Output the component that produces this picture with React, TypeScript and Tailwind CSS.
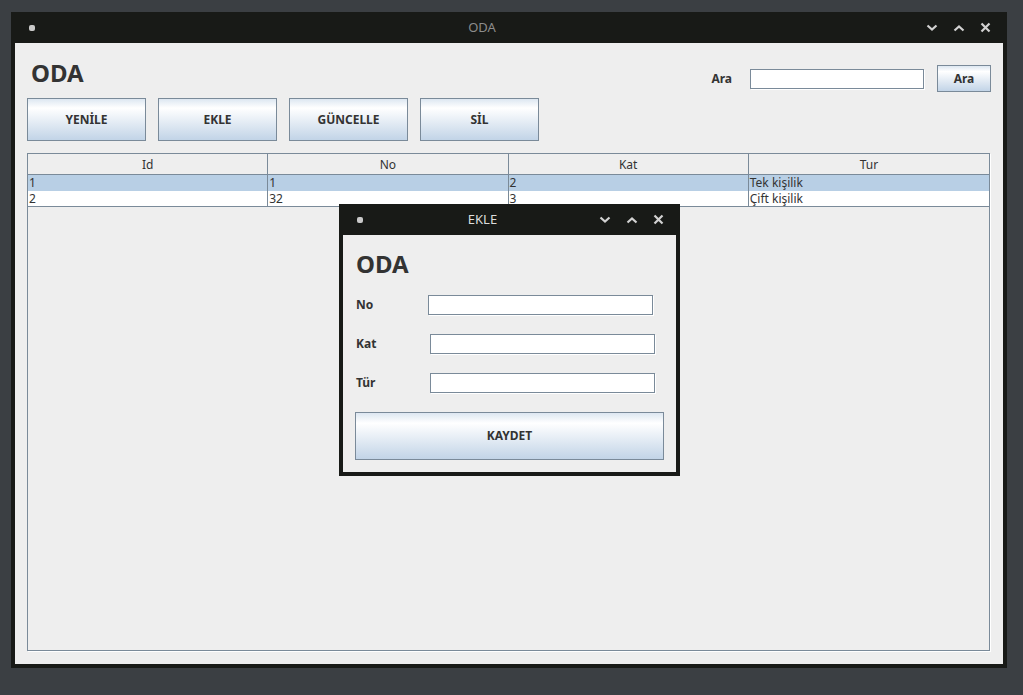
import React from "react";

const rows = [
  { id: "1", no: "1", kat: "2", tur: "Tek kişilik", selected: true },
  { id: "2", no: "32", kat: "3", tur: "Çift kişilik", selected: false },
];

function TitleIcons() {
  return (
    <div className="flex w-[89px] items-center justify-end pr-[8px]">
      <div className="flex h-[27px] w-[27px] items-center justify-center">
        <svg width="12" height="8" viewBox="0 0 12 8" fill="none">
          <polyline points="1.5,1.5 6,5.5 10.5,1.5" stroke="#d2d2d2" strokeWidth="2.2" />
        </svg>
      </div>
      <div className="flex h-[27px] w-[27px] items-center justify-center">
        <svg width="12" height="8" viewBox="0 0 12 8" fill="none">
          <polyline points="1.5,6.5 6,2.5 10.5,6.5" stroke="#d2d2d2" strokeWidth="2.2" />
        </svg>
      </div>
      <div className="flex h-[27px] w-[27px] items-center justify-center">
        <svg width="11" height="11" viewBox="0 0 11 11" fill="none">
          <path d="M1.5 1.5 L9.5 9.5 M9.5 1.5 L1.5 9.5" stroke="#d2d2d2" strokeWidth="2.2" />
        </svg>
      </div>
    </div>
  );
}

function TitleBar({ title, active }: { title: string; active?: boolean }) {
  return (
    <div className="flex h-[31px] shrink-0 items-center bg-[#181a17]">
      <div className="flex w-[35px] items-center pl-[18px]">
        <span className="block h-[6px] w-[6px] rounded-[2px] bg-[#c9c9c9]" />
      </div>
      <div
        className={
          active
            ? "flex-1 text-center text-[13px] text-[#dcdcdc]"
            : "flex-1 text-center text-[13px] text-[#8c8c8c]"
        }
      >
        {title}
      </div>
      <TitleIcons />
    </div>
  );
}

function OceanButton({ label, className }: { label: string; className: string }) {
  return (
    <button
      className={
        "flex items-center justify-center border border-[#7a8a99] bg-[linear-gradient(to_bottom,#dde7f1_0%,#ffffff_22%,#c2d4e7_100%)] text-[12px] font-bold text-[#333333] " +
        className
      }
    >
      {label}
    </button>
  );
}

function TextInput({ className }: { className: string }) {
  return (
    <div
      className={
        "border border-[#7a8a99] bg-white shadow-[1px_1px_0_#ffffff] " + className
      }
    />
  );
}

function EkleDialog() {
  return (
    <div className="absolute left-[339px] top-[204px] flex h-[272px] w-[341px] flex-col bg-[#181a17]">
      <TitleBar title="EKLE" active />
      <div className="mx-[4px] mb-[4px] flex flex-1 flex-col bg-[#eeeeee] px-[12px]">
        <div className="mt-[17px] pl-[1px] text-[24px] font-bold leading-[24px] text-[#333333]">
          ODA
        </div>
        <div className="mt-[19px] flex h-[20px] items-center pl-[1px]">
          <span className="w-[72px] text-[12px] font-bold text-[#333333]">No</span>
          <TextInput className="h-[20px] w-[225px]" />
        </div>
        <div className="mt-[19px] flex h-[20px] items-center pl-[1px]">
          <span className="w-[74px] text-[12px] font-bold text-[#333333]">Kat</span>
          <TextInput className="h-[20px] w-[225px]" />
        </div>
        <div className="mt-[19px] flex h-[20px] items-center pl-[1px]">
          <span className="w-[74px] text-[12px] font-bold text-[#333333]">Tür</span>
          <TextInput className="h-[20px] w-[225px]" />
        </div>
        <OceanButton label="KAYDET" className="mt-[19px] h-[48px] w-full" />
      </div>
    </div>
  );
}

export default function App() {
  return (
    <div className="relative h-[695px] w-full overflow-hidden bg-[#3b3f43] pl-[11px] pt-[12px] font-['Noto_Sans',sans-serif]">
      <div className="flex h-[656px] w-[996px] flex-col bg-[#181a17]">
        <TitleBar title="ODA" />
        <div className="mx-[4px] mb-[4px] flex flex-1 flex-col bg-[#eeeeee] px-[12px] pb-[12px]">
          {/* Top row */}
          <div className="flex h-[55px] shrink-0 items-start justify-between">
            <div className="mt-[18px] pl-[4px] text-[24px] font-bold leading-[24px] text-[#333333]">
              ODA
            </div>
            <div className="mt-[22px] flex h-[27px] items-center">
              <span className="mr-[18px] text-[12px] font-bold text-[#333333]">Ara</span>
              <TextInput className="h-[20px] w-[174px]" />
              <OceanButton label="Ara" className="ml-[13px] h-[27px] w-[54px]" />
            </div>
          </div>

          {/* Action buttons */}
          <div className="flex shrink-0 gap-[12px]">
            <OceanButton label="YENİLE" className="h-[43px] w-[119px]" />
            <OceanButton label="EKLE" className="h-[43px] w-[119px]" />
            <OceanButton label="GÜNCELLE" className="h-[43px] w-[119px]" />
            <OceanButton label="SİL" className="h-[43px] w-[119px]" />
          </div>

          {/* Table */}
          <div className="mb-[1px] mr-[1px] mt-[12px] flex flex-1 flex-col border border-[#7a8a99] shadow-[1px_1px_0_#ffffff]">
            <div className="grid h-[21px] grid-cols-4 border-b border-[#7a8a99] bg-[#eeeeee]">
              {["Id", "No", "Kat", "Tur"].map((h) => (
                <div
                  key={h}
                  className="flex items-center justify-center border-r border-[#7a8a99] pt-[2px] text-[12px] leading-none text-[#333333] last:border-r-0"
                >
                  {h}
                </div>
              ))}
            </div>
            {rows.map((r, i) => (
              <div
                key={r.id}
                className={
                  (r.selected ? "bg-[#b8cfe5] " : "bg-white ") +
                  (i === rows.length - 1 ? "h-[16px] border-b border-[#7a8a99] " : "h-[16px] ") +
                  "grid grid-cols-4"
                }
              >
                {[r.id, r.no, r.kat, r.tur].map((c, j) => (
                  <div
                    key={j}
                    className="flex items-center border-r border-[#7a8a99] pl-[1px] text-[12px] leading-none text-[#333333] last:border-r-0"
                  >
                    {c}
                  </div>
                ))}
              </div>
            ))}
          </div>
        </div>
      </div>
      <EkleDialog />
    </div>
  );
}
